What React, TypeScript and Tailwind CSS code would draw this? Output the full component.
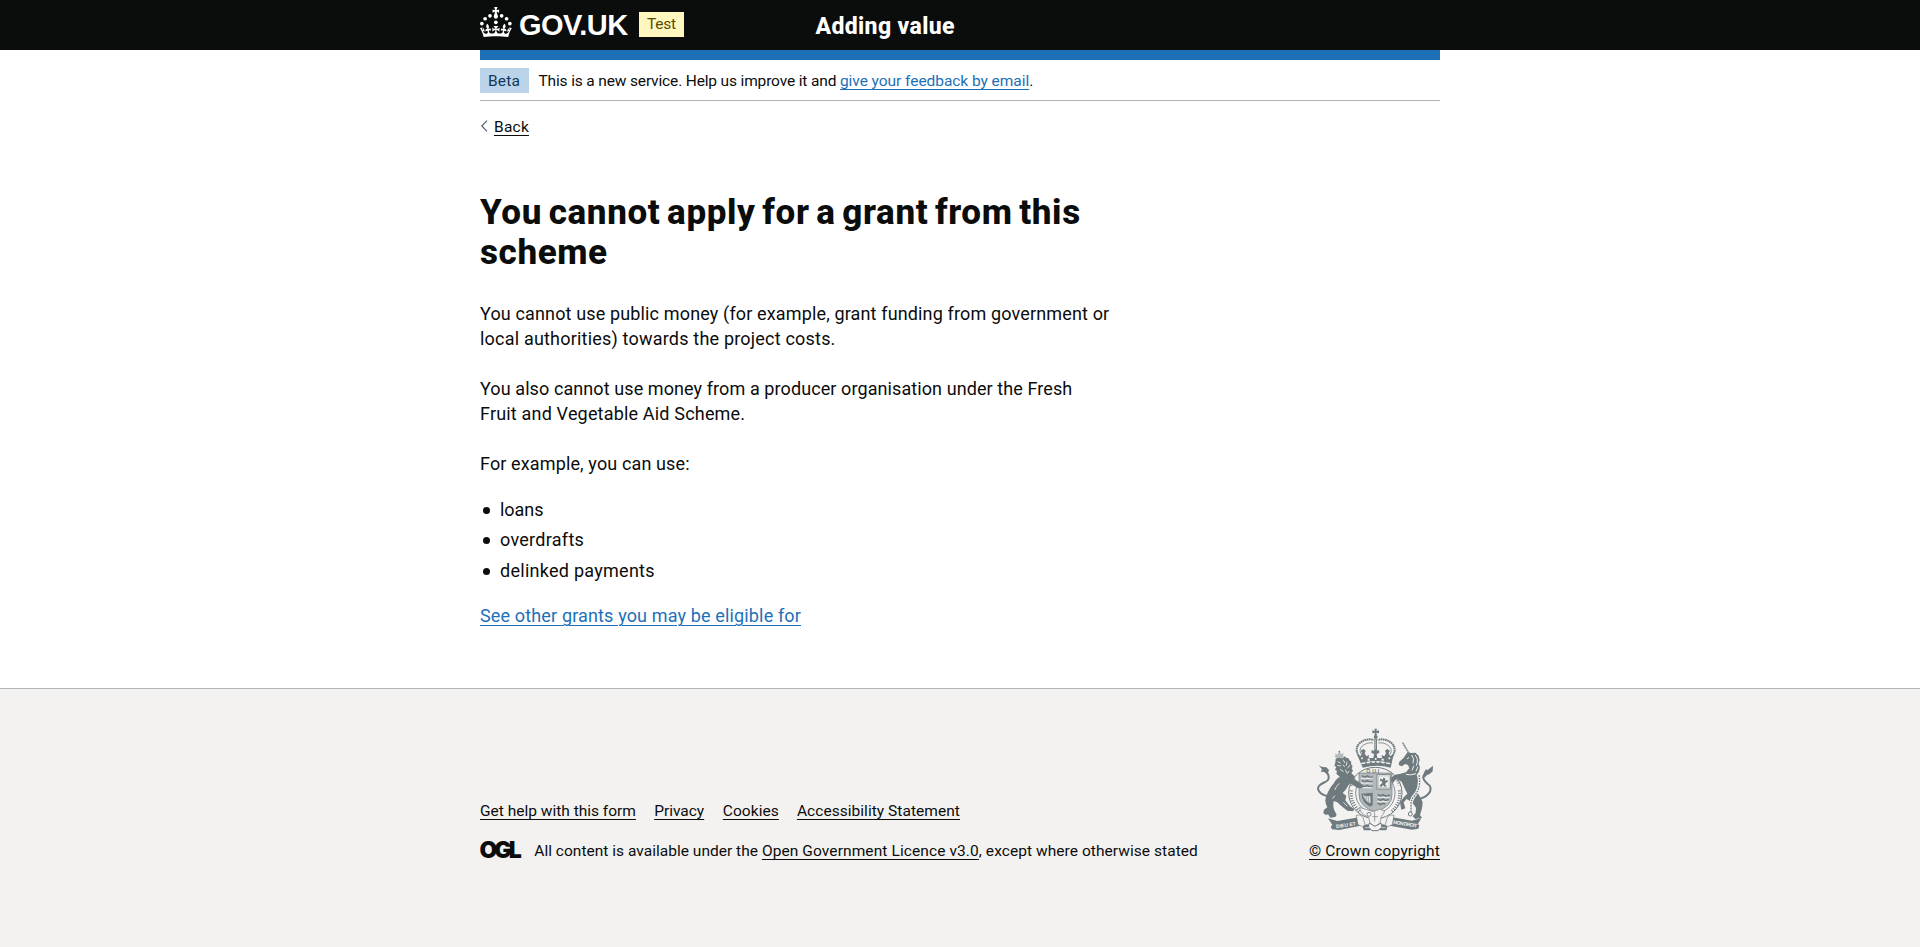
const link = 'underline decoration-1 underline-offset-[3px] whitespace-pre';

function CrownIcon() {
  return (
    <svg viewBox="0 0 64 60" className="mt-[7px] h-[30px] w-[32px] shrink-0 fill-white" aria-hidden="true">
      <circle cx="20" cy="17.6" r="3.7" />
      <circle cx="10.2" cy="23.5" r="3.7" />
      <circle cx="3.7" cy="33.2" r="3.7" />
      <circle cx="31.7" cy="30.6" r="3.7" />
      <circle cx="43.3" cy="17.6" r="3.7" />
      <circle cx="53.2" cy="23.5" r="3.7" />
      <circle cx="59.7" cy="33.2" r="3.7" />
      <path d="M33.1,9.8c.2-.1.3-.3.5-.5l4.6,2.4v-6.8l-4.6,1.5c-.1-.2-.3-.3-.5-.5l1.9-5.9h-6.7l1.9,5.9c-.2.1-.3.3-.5.5l-4.6-1.5v6.8l4.6-2.4c.1.2.3.3.5.5l-2.6,8c-.9,2.8,1.2,5.7,4.1,5.7h0c3,0,5.1-2.9,4.1-5.7l-2.6-8ZM37,37.9s-3.4,3.8-4.1,6.1c2.2,0,4.2-.5,6.4-2.8l-.7,8.5c-2-2.8-4.4-4.1-5.7-3.8.1,3.1.5,6.7,5.8,7.2,3.7.3,6.7-1.5,7-3.8.4-2.6-2-4.3-3.7-1.6-1.4-4.5,2.4-6.1,4.9-3.2-1.9-4.5-1.8-7.7,2.4-10.9,3,4,2.6,7.3-1.2,11.1,2.4-1.3,6.2,0,4,4.6-1.2-2.8-3.7-2.2-4.2.2-.3,1.7.7,3.7,3,4.2,1.9.3,4.7-.9,7-5.9-1.3,0-2.4.7-3.9,1.7l2.4-8c.6,2.3,1.4,3.7,2.2,4.5.6-1.6.5-2.8,0-5.3l5,1.8c-2.6,3.6-5.2,8.7-7.3,17.5-7.4-1.1-15.7-1.7-24.5-1.7h0c-8.8,0-17.1.6-24.5,1.7-2.1-8.9-4.7-13.9-7.3-17.5l5-1.8c-.5,2.5-.6,3.7,0,5.3.8-.8,1.6-2.3,2.2-4.5l2.4,8c-1.5-1-2.6-1.7-3.9-1.7,2.3,5,5.2,6.2,7,5.9,2.3-.4,3.3-2.4,3-4.2-.5-2.4-3-3.1-4.2-.2-2.2-4.6,1.6-6,4-4.6-3.7-3.7-4.2-7.1-1.2-11.1,4.2,3.2,4.3,6.4,2.4,10.9,2.5-2.8,6.3-1.3,4.9,3.2-1.8-2.7-4.1-1-3.7,1.6.3,2.3,3.3,4.1,7,3.8,5.4-.5,5.7-4.2,5.8-7.2-1.3-.2-3.7,1-5.7,3.8l-.7-8.5c2.2,2.3,4.2,2.7,6.4,2.8-.7-2.3-4.1-6.1-4.1-6.1h10.6,0Z" />
    </svg>
  );
}

function RoyalArms() {
  const ink = '#6f7a7e';
  const mid = '#b4babc';
  const paper = '#f3f2f1';
  return (
    <svg viewBox="75 39 360 312" className="ml-[6px] h-[104px] w-[120px]" fill={ink} stroke="none" aria-hidden="true">
      {/* crown */}
      <path d="M253 41h8l-2 7 8-2v9l-8-2 2 8h-8l2-8-8 2v-9l8 2z" />
      <circle cx="257" cy="66" r="6" />
      <g fill="none" stroke={ink}>
        <path d="M257 72V112" strokeWidth="8" />
        <path d="M257 74V110" strokeWidth="3" stroke={paper} strokeDasharray="3 3" />
        <path d="M206 122C184 88 228 66 251 75M308 122C330 88 286 66 263 75" strokeWidth="6" strokeDasharray="5 1.5" />
        <path d="M214 118C200 96 230 80 249 84M300 118C314 96 284 80 265 84" strokeWidth="2.5" />
      </g>
      <path d="M201 118l11 5 4-9-4-7 8-5 7 5-3 8 5 9 8-4-1 9h14l2-12-8-4 1-8 8 3 3-7 3 7 8-3 1 8-8 4 2 12h14l-1-9 8 4 5-9-3-8 7-5 8 5-4 7 4 9 11-5-9 40q-40-11-84 0z" />
      <g fill={paper}>
        <circle cx="216" cy="130" r="3" /><circle cx="236" cy="134" r="3.5" /><circle cx="257" cy="132" r="3" /><circle cx="278" cy="134" r="3.5" /><circle cx="298" cy="130" r="3" />
        <path d="M213 144q44-12 88 0l-1 4q-43-10-86 0z" />
      </g>
      <g fill={ink}><circle cx="228" cy="145" r="3" /><circle cx="243" cy="143" r="3" /><circle cx="257" cy="142" r="3" /><circle cx="271" cy="143" r="3" /><circle cx="286" cy="145" r="3" /></g>

      {/* lion */}
      <path d="M135 126l2-12 5 5 6-9 6 8 6-5v12l-5 7h-15z" fill={mid} />
      <circle cx="148" cy="110" r="2.5" fill={ink} />
      <path d="M137 132l7-3 14 1 5-6 7 5 6 1 2 6 6 4-1 7 5 7-3 6 4 7-5 7 5 5 14 14 14 13-3 8-17 3-18-12-5 8q-6 12-16 21l11 8-3 14 14 18 13 8-4 7-17-2-17-13-13-12-11-4q-3 16 2 28l7 13-4 7-15 2-7-10-6 2-8-5 2-11 10-7q-10-16-3-35 10-24 23-38 7-14 18-18l-11-10 2-8-6-4 4-8-6-4 3-9z" />
      <path d="M112 243C90 240 78 222 88 212C98 200 119 202 116 184C114 171 104 169 96 164" fill="none" stroke={ink} strokeWidth="6" />
      <path d="M86 151l11 5 12 1 8 8-5 14-9-10-10 3 3-9z" />
      <g fill="none" stroke={paper} strokeWidth="2.5">
        <path d="M143 140l9 4M142 151l11 2M160 134l4 10M171 140l-2 12M180 150l-8 10M150 163l11 7M166 164l6 12M158 150l7 5M178 168l-5 6" />
        <path d="M148 205q-10 9-14 20M127 251l8-9M160 262l12 12" />
      </g>

      {/* unicorn */}
      <path d="M338 83l17 29" stroke={ink} strokeWidth="4" strokeDasharray="5 1" />
      <path d="M353 111L364 114L376 113L386 122L389 135L386 146L390 158L386 172L380 180L388 198L385 215L380 228L390 245L398 262L396 280L390 300L396 308L376 312L368 304L377 294L378 278L366 262L350 252L341 262L346 280L334 284L330 262L342 246L352 236L345 222L335 200L322 192L310 195L306 205L299 200L302 188L312 180L332 176L348 172L358 160L354 150L345 147L336 154L326 150L328 140L340 130Z" />
      <path d="M388 252C415 244 428 226 419 212C410 203 397 197 400 184C402 176 411 174 415 166" fill="none" stroke={ink} strokeWidth="6" />
      <path d="M429 152l-1 17-9 8-8 3-8 9-2-14 7-13 4 4z" />
      <g fill="none" stroke={paper}>
        <path d="M365 120q9 10 4 25M375 120q12 12 4 32M357 127l-6 5M384 155l-6 14M372 152l-6 14" strokeWidth="3" />
        <path d="M346 178q16 4 32-2" strokeWidth="3" />
      </g>
      <path d="M387 180C393 212 384 232 370 246C358 262 366 278 362 292" fill="none" stroke={paper} strokeWidth="10" />
      <path d="M387 180C393 212 384 232 370 246C358 262 366 278 362 292" fill="none" stroke={ink} strokeWidth="4" strokeDasharray="5 3" />
      <circle cx="361" cy="297" r="6" fill={paper} stroke={ink} strokeWidth="3" />

      {/* garter */}
      <ellipse cx="256" cy="234" rx="80" ry="77" fill={paper} stroke={ink} strokeWidth="3" />
      <ellipse cx="256" cy="234" rx="59" ry="60" fill={paper} stroke={ink} strokeWidth="2.5" />
      <path d="M193 189q-8 12-10 24M184 226q-1 18 4 34M190 262q7 16 18 27M325 262q-8 16-20 27M328 226q2 16-2 32M319 189q7 10 9 22" fill="none" stroke={ink} strokeWidth="9" strokeDasharray="3 4.5" />
      <text x="229" y="173" fontFamily="Liberation Sans" fontSize="16" fontWeight="700" letterSpacing="5" fill={ink}>QUI</text>

      {/* shield */}
      <path d="M207 174h99v66q0 35-49 51q-50-16-50-51z" fill={mid} stroke={ink} strokeWidth="2" />
      <g fill="none" stroke={ink} strokeWidth="5">
        <path d="M216 182l8 5 8-4 9 5 7-3M216 196l8 5 8-4 9 5 7-3M213 210l11 5 8-4 9 5 7-3" />
        <path d="M263 238l8 5 8-4 9 5 12-4M263 251l8 5 8-4 9 5 8-4M263 264l8 5 8-4 7 3" />
      </g>
      <path d="M213 190h34M213 204h34M262 247h36M262 260h33M213 218h34" stroke={paper} strokeWidth="3" />
      <rect x="261" y="179" width="40" height="43" fill={paper} stroke={ink} strokeWidth="2.5" />
      <rect x="265" y="183" width="32" height="35" fill="none" stroke={mid} strokeWidth="2" />
      <path d="M271 190l7 4 2-6 6 2-1 7 7-3 1 7-6 3-1 5 5 5-7 1-5-5-4 5-7-1 4-6 5-4-2-6-5 1z" />
      <path d="M214 236l34-3v38l-8 4q-24-12-26-39z" fill={ink} />
      <path d="M219 239q10 8 22 4v22q-18-8-22-26z" fill={paper} />
      <path d="M224 242l2 13M230 245l1 16M236 245v19" stroke={ink} strokeWidth="2" />

      {/* paws over the garter */}
      <path d="M176 184l20 10 14 9 11 12-6 5-12-1-14-9-18-8z" />
      <path d="M348 174l-19 5-16 2-9 7-1 12 7 3 6-9 10-2 10 6 12 6z" />

      {/* buckle and strap */}
      <path d="M208 277l20 6 22 7 20-8 14 8-10 14-4 20-16 12-14-12-4-16-22-15z" fill={paper} stroke={ink} strokeWidth="2" />
      <circle cx="237" cy="298" r="6" fill="none" stroke={ink} strokeWidth="2.5" />
      <path d="M254 292v28M247 305h17" stroke={ink} strokeWidth="2" />

      {/* scroll */}
      <path d="M114 310l28 8 65-11 10-1 5 25-10 1-65 13-21-2-4-8 5-5z" />
      <path d="M394 309l-28 8-63-11-9-1-4 26 9 1 67 12 19-3 3-9-4-5z" />
      <path d="M199 301q12-5 20 6l6 22-7 6-14-6zM312 301q-13-5-20 6l-6 22 7 6 14-6z" fill={paper} stroke={ink} strokeWidth="2" />
      <g fontFamily="Liberation Sans" fontSize="15" fontWeight="700" fill={paper}>
        <text transform="rotate(-9 139 340)" x="139" y="340" textLength="60">DIEU ET</text>
        <text transform="rotate(9 309 326)" x="309" y="326" textLength="72">MON DROIT</text>
      </g>
      <path d="M218 335q10-12 20-5l8 11-6 5h-19zM292 335q-10-12-20-5l-8 11 6 5h19z" />
      <path d="M238 324l17 10 18-10 3 12-12 11h-18l-11-11z" fill={paper} stroke={ink} strokeWidth="3" />
      <path d="M225 338h13M274 338h13" stroke={paper} strokeWidth="2" />
    </svg>
  );
}

function Header() {
  return (
    <header className="h-[50px] bg-[#0b0c0c] text-white">
      <div className="mx-auto flex w-[960px] items-start">
        <div className="flex w-[159px] items-start">
          <CrownIcon />
          <span className="mt-[9px] ml-[7px] font-['Liberation_Sans',sans-serif] text-[29px] leading-[32px] font-bold tracking-[-0.5px]">GOV.UK</span>
        </div>
        <strong className="mt-[12px] h-[25px] w-[45px] bg-[#fff7bf] pt-[2px] pl-[8px] font-normal tracking-[-0.25px] text-[#594d00]">Test</strong>
        <span className="mt-[14px] ml-[131.5px] text-[23px] leading-[25px] font-extrabold tracking-[0.37px]">Adding value</span>
      </div>
    </header>
  );
}

function PhaseBanner() {
  return (
    <div className="flex h-[41px] items-start border-b border-[#b1b4b6] pt-[8px]">
      <strong className="h-[25px] w-[49px] bg-[#bbd4ea] pt-[3px] pl-[8px] font-normal tracking-[0.2px] text-[#0f385c]">Beta</strong>
      <p className="mt-[3px] ml-[9.5px] whitespace-pre">
        <span className="tracking-[-0.15px]">This is a new service. Help us improve it and </span>
        <a className={`${link} tracking-[-0.05px] text-[#1d70b8]`}>give your feedback by email</a>.
      </p>
    </div>
  );
}

function Bullet({ children, className }: { children: string; className: string }) {
  return (
    <li className={`flex items-start ${className}`}>
      <span className="mt-[10px] mr-[10px] ml-[3px] size-[7px] rounded-full bg-[#0b0c0c]" />
      {children}
    </li>
  );
}

export default function App() {
  return (
    <div className="flex min-h-screen flex-col bg-white font-['Roboto',sans-serif] text-[15.5px] leading-[20px] text-[#0b0c0c]">
      <Header />
      <div className="mx-auto w-[960px]">
        <div className="h-[10px] bg-[#1d70b8]" />
        <PhaseBanner />
        <a className="mt-[16px] flex w-fit items-start">
          <svg viewBox="0 0 8 12" className="mt-[3px] mr-[6px] h-[12px] w-[8px]" fill="none" stroke="#505a5f" strokeWidth="1.1" aria-hidden="true">
            <path d="M7 .6 1.8 6 7 11.4" />
          </svg>
          <span className={`${link} tracking-[0.23px]`}>Back</span>
        </a>
        <main className="mt-[56px] pb-[60px] text-[18px] leading-[25px]">
          <h1 className="mb-[28px] text-[35px] leading-[40px] font-extrabold">
            <span className="block tracking-[0.62px] [word-spacing:-2.6px]">You cannot apply for a grant from this</span>
            <span className="block tracking-[0.6px]">scheme</span>
          </h1>
          <p className="mb-[25px]">
            <span className="block tracking-[0.145px]">You cannot use public money (for example, grant funding from government or</span>
            <span className="block tracking-[0.2px]">local authorities) towards the project costs.</span>
          </p>
          <p className="mb-[25px]">
            <span className="block tracking-[0.09px]">You also cannot use money from a producer organisation under the Fresh</span>
            <span className="block tracking-[0.18px]">Fruit and Vegetable Aid Scheme.</span>
          </p>
          <p className="mb-[21px] tracking-[0.13px]">For example, you can use:</p>
          <ul className="mb-[20px]">
            <Bullet className="mb-[5px] tracking-[-0.05px]">loans</Bullet>
            <Bullet className="mb-[6px] tracking-[0.28px]">overdrafts</Bullet>
            <Bullet className="tracking-[0.27px]">delinked payments</Bullet>
          </ul>
          <p>
            <a className={`${link} tracking-[0.147px] text-[#1d70b8]`}>See other grants you may be eligible for</a>
          </p>
        </main>
      </div>
      <footer className="grow border-t border-[#b1b4b6] bg-[#f3f2f1] pt-[39px]">
        <div className="mx-auto flex w-[960px] items-end justify-between">
          <div>
            <nav className="mb-[20px] flex gap-[18px]">
              <a className={link}>Get help with this form</a>
              <a className={`${link} ml-[0.2px]`}>Privacy</a>
              <a className={`${link} ml-[0.6px] tracking-[0.07px]`}>Cookies</a>
              <a className={`${link} tracking-[0.045px]`}>Accessibility Statement</a>
            </nav>
            <div className="flex h-[20px] items-start">
              <span className="-mt-[5px] -ml-[0.5px] w-[54.8px] font-['Inter',sans-serif] text-[23px] leading-[28px] font-black tracking-[-3px]">OGL</span>
              <p className="whitespace-pre">
                <span className="tracking-[0.02px]">All content is available under the </span>
                <a className={`${link} tracking-[0.099px]`}>Open Government Licence v3.0</a>
                <span className="tracking-[0.056px]">, except where otherwise stated</span>
              </p>
            </div>
          </div>
          <div className="w-[131px]">
            <RoyalArms />
            <a className={`${link} mt-[9px] block tracking-[0.155px]`}>© Crown copyright</a>
          </div>
        </div>
      </footer>
    </div>
  );
}
